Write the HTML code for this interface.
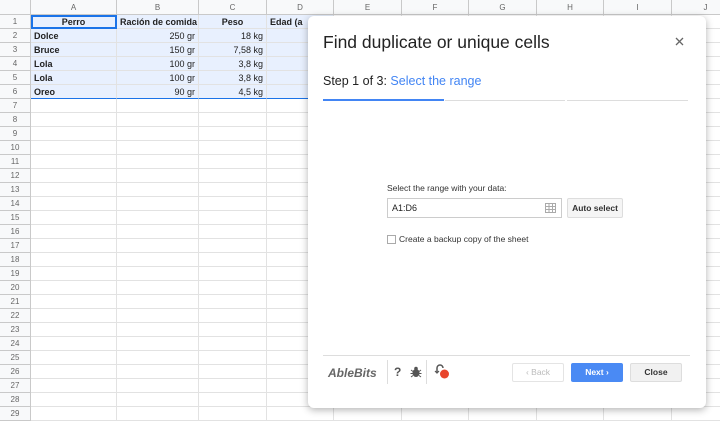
<!DOCTYPE html>
<html><head><style>
*{margin:0;padding:0;box-sizing:border-box}
body{width:720px;height:416px;overflow:hidden;background:#fff;font-family:"Liberation Sans",Arial,sans-serif;position:relative}
.grid{position:absolute;left:0;top:0}
.c{position:absolute;border-right:1px solid #e2e2e2;border-bottom:1px solid #e2e2e2;font-size:9px;line-height:14px;white-space:nowrap;overflow:hidden;padding:0 3px;color:#222}
.h{background:#f8f9fa;color:#666;text-align:center;border-color:#c9c9c9;font-size:8px}
.sel{background:#e8f0fe}
.b{font-weight:bold}
.dlg{position:absolute;left:308px;top:16px;width:398px;height:392px;background:#fff;border-radius:6px;box-shadow:0 2px 8px rgba(0,0,0,.3)}
</style></head><body>
<div class="grid" id="g"></div>
<script>
var cols=[[0,31,''],[31,117,'A'],[117,199,'B'],[199,267,'C'],[267,334,'D'],[334,402,'E'],[402,469,'F'],[469,537,'G'],[537,604,'H'],[604,672,'I'],[672,740,'J']];
var data=[['Perro','Ración de comida','Peso','Edad (a'],['Dolce','250 gr','18 kg',''],['Bruce','150 gr','7,58 kg',''],['Lola','100 gr','3,8 kg',''],['Lola','100 gr','3,8 kg',''],['Oreo','90 gr','4,5 kg','']];
var h='';var top0=15,rh=14;
for(var i=0;i<cols.length;i++){h+='<div class="c h" style="left:'+cols[i][0]+'px;top:0;width:'+(cols[i][1]-cols[i][0])+'px;height:15px;line-height:15px">'+cols[i][2]+'</div>';}
for(var r=0;r<29;r++){var y=Math.round(top0+r*rh),hh=Math.round(top0+(r+1)*rh)-y;
h+='<div class="c h" style="left:0;top:'+y+'px;width:31px;height:'+hh+'px;line-height:'+hh+'px">'+(r+1)+'</div>';
for(var i=1;i<cols.length;i++){var t='',cl='c';
var st='left:'+cols[i][0]+'px;top:'+y+'px;width:'+(cols[i][1]-cols[i][0])+'px;height:'+hh+'px;line-height:'+hh+'px;';
if(r<6&&i<=4){cl='c sel b';t=data[r][i-1];if(r==0){st+='text-align:'+(i==1||i==3?'center':'left')+';';}else if(i>1){st+='text-align:right;font-weight:normal;';}}
if(r==0&&i==1)st+='outline:2px solid #1a73e8;outline-offset:-2px;';
if(r==5&&i<=4)st+='border-bottom:1px solid #1a73e8;';
h+='<div class="'+cl+'" style="'+st+'">'+t+'</div>';}}
document.getElementById('g').innerHTML=h;
</script>
<div class="dlg">
<div style="position:absolute;left:15px;top:16px;font-size:17.5px;color:#222">Find duplicate or unique cells</div>
<svg style="position:absolute;left:367px;top:21px" width="9" height="9"><path d="M1 1L8 8M8 1L1 8" stroke="#666" stroke-width="1.3"/></svg>
<div style="position:absolute;left:15px;top:58px;font-size:12.5px;color:#222">Step 1 of 3: <span style="color:#4285f4">Select the range</span></div>
<div style="position:absolute;left:15px;top:83px;width:121px;height:2px;background:#4285f4"></div>
<div style="position:absolute;left:137px;top:84px;width:120px;height:1px;background:#ddd"></div>
<div style="position:absolute;left:259px;top:84px;width:121px;height:1px;background:#ddd"></div>
<div style="position:absolute;left:79px;top:167px;font-size:8.5px;color:#333">Select the range with your data:</div>
<div style="position:absolute;left:79px;top:182px;width:175px;height:20px;border:1px solid #ccc;font-size:9px;line-height:18px;padding-left:4px;color:#222">A1:D6
<svg style="position:absolute;right:5px;top:4px" width="11" height="10"><g fill="none" stroke="#aaa" stroke-width="1"><rect x=".5" y=".5" width="10" height="9"/><path d="M4 .5v9M7.5 .5v9M.5 3.5h10M.5 6.5h10"/></g></svg></div>
<div style="position:absolute;left:259px;top:182px;width:56px;height:20px;border:1px solid #ddd;background:#f5f5f5;border-radius:2px;font-size:8.5px;line-height:18px;text-align:center;font-weight:bold;color:#333">Auto select</div>
<div style="position:absolute;left:79px;top:219px;width:9px;height:9px;border:1px solid #aaa"></div>
<div style="position:absolute;left:91px;top:218px;font-size:8.5px;color:#333">Create a backup copy of the sheet</div>
<div style="position:absolute;left:15px;top:339px;width:367px;height:1px;background:#ddd"></div>
<div style="position:absolute;left:20px;top:350px;font-size:12px;font-weight:bold;font-style:italic;color:#666">AbleBits</div>
<div style="position:absolute;left:79px;top:344px;width:1px;height:24px;background:#ddd"></div>
<div style="position:absolute;left:86px;top:349px;font-size:12px;font-weight:bold;color:#555">?</div>
<svg style="position:absolute;left:102px;top:350px" width="12" height="12"><g fill="#555"><ellipse cx="6" cy="7" rx="3.5" ry="4"/><circle cx="6" cy="2.5" r="1.8"/></g><path d="M1 4l2 1.5M11 4l-2 1.5M0.5 7.5h2.5M11.5 7.5H9M1 11l2-1.5M11 11l-2-1.5" stroke="#555" stroke-width="1"/></svg>
<div style="position:absolute;left:118px;top:344px;width:1px;height:24px;background:#ddd"></div>
<svg style="position:absolute;left:126px;top:347px" width="16" height="17"><path d="M3 9V5a3 3 0 0 1 6 0" fill="none" stroke="#555" stroke-width="1.5"/><path d="M1 8l2 2 2-2" fill="none" stroke="#555" stroke-width="1.2"/><circle cx="10.5" cy="11" r="4.5" fill="#e8452c"/></svg>
<div style="position:absolute;left:204px;top:347px;width:52px;height:19px;border:1px solid #e4e4e4;border-radius:2px;font-size:8.5px;line-height:17px;text-align:center;color:#bbb">‹ Back</div>
<div style="position:absolute;left:263px;top:347px;width:52px;height:19px;background:#4a8af4;border-radius:2px;font-size:8.5px;line-height:19px;text-align:center;color:#fff;font-weight:bold">Next ›</div>
<div style="position:absolute;left:322px;top:347px;width:52px;height:19px;border:1px solid #ddd;background:#f1f1f1;border-radius:2px;font-size:8.5px;line-height:17px;text-align:center;color:#333;font-weight:bold">Close</div>
</div>
</body></html>
